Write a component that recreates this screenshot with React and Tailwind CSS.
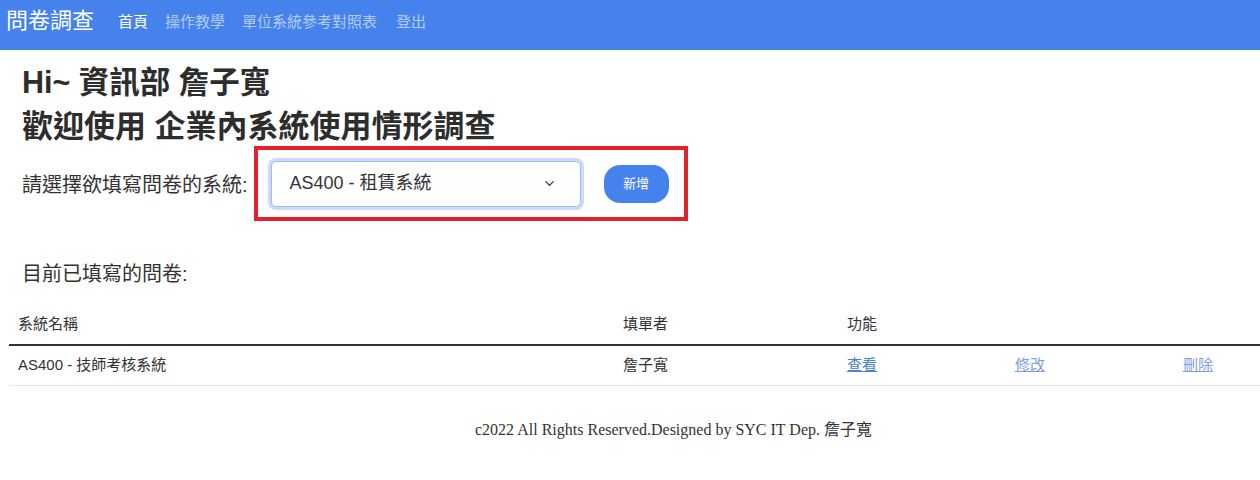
import { ChevronDown } from "lucide-react";

const font = "font-['Liberation_Sans','Noto_Sans_CJK_TC',sans-serif]";

function NavBar() {
  return (
    <nav className="h-[50px] bg-[#4582ec] flex items-start pt-[5px] px-[6px]">
      <div className="text-[22px] leading-[32px] text-white mr-[24px]">問卷調查</div>
      <div className="flex gap-[17px] text-[15px] leading-[32px] pt-[1px]">
        <span className="text-white">首頁</span>
        <span className="text-white/60">操作教學</span>
        <span className="text-white/60">單位系統參考對照表</span>
        <span className="text-white/60 ml-[2px]">登出</span>
      </div>
    </nav>
  );
}

function Picker() {
  return (
    <div className="flex items-center pl-[22px]">
      <span className="text-[20px] text-[#333] mr-[6px] pt-[2px]">請選擇欲填寫問卷的系統:</span>
      <div className="border-[4px] border-[#e3212b] flex items-center pl-[13px] pr-[15px] h-[75px]">
        <div className="w-[310px] h-[46px] rounded-[5px] border border-[#9ebdf3] ring-[3px] ring-[#c9dafa] bg-white flex items-center justify-between pl-[18px] pr-[23px]">
          <span className="text-[18px] text-[#333]">AS400 - 租賃系統</span>
          <ChevronDown size={15} strokeWidth={2} className="text-[#333]" />
        </div>
        <button className="ml-[23px] w-[65px] h-[38px] rounded-[16px] bg-[#4582ec] text-white text-[13px]">
          新增
        </button>
      </div>
    </div>
  );
}

function Table() {
  const cols = "grid grid-cols-[605px_224px_168px_168px_1fr]";
  return (
    <div className="ml-[9px] mt-[17px] text-[15px] text-[#333]">
      <div className={cols + " h-[41px] items-center border-b-2 border-[#333] pl-[9px]"}>
        <span>系統名稱</span>
        <span>填單者</span>
        <span>功能</span>
        <span></span>
        <span></span>
      </div>
      <div className={cols + " h-[40px] items-center border-b border-[#e5e5e5] pl-[9px]"}>
        <span>AS400 - 技師考核系統</span>
        <span>詹子寬</span>
        <a className="text-[#4a7fd8] underline">查看</a>
        <a className="text-[#7fa0e0] underline">修改</a>
        <a className="text-[#7fa0e0] underline">刪除</a>
      </div>
    </div>
  );
}

export default function App() {
  return (
    <div className={"w-[1260px] h-[480px] bg-white overflow-hidden " + font}>
      <NavBar />
      <div className="pl-[22px] pt-[14px] text-[#2d2d2d] font-bold">
        <h3 className="text-[30.5px] leading-[36px]">Hi~ 資訊部 詹子寬</h3>
        <h2 className="text-[31px] leading-[38px] mt-[8px]">歡迎使用 企業內系統使用情形調查</h2>
      </div>
      <Picker />
      <div className="pl-[22px] mt-[39px] text-[20px] leading-[28px] text-[#333]">目前已填寫的問卷:</div>
      <Table />
      <footer className="mt-[32px] pl-[475px] text-[16px] leading-[24px] text-[#333] font-['Liberation_Serif','Noto_Sans_CJK_TC',serif]">
        c2022 All Rights Reserved.Designed by SYC IT Dep. 詹子寬
      </footer>
    </div>
  );
}
